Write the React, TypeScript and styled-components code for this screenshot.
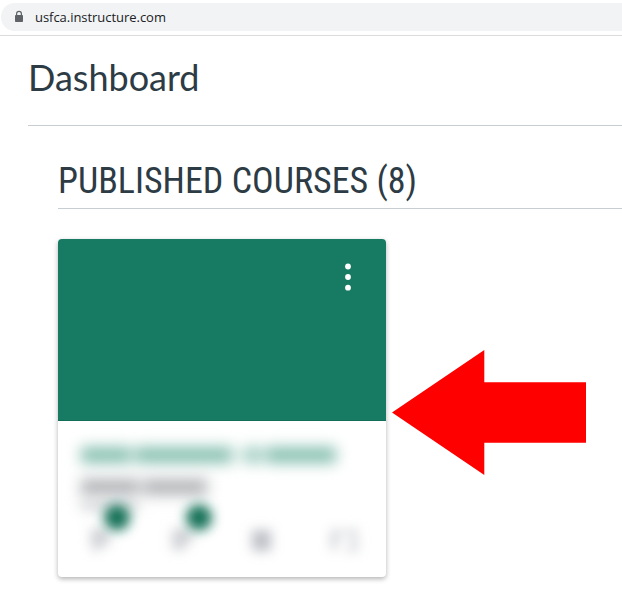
import React from "react";
import styled, { createGlobalStyle } from "styled-components";

const GlobalStyle = createGlobalStyle`
  *, *::before, *::after { box-sizing: border-box; }
  body { margin: 0; background: #fff; overflow: hidden; }
`;

const Page = styled.div`
  width: 622px;
  height: 608px;
  overflow: hidden;
  background: #fff;
  color: #2d3b45;
`;

const BrowserBar = styled.header`
  height: 36px;
  padding: 3px 0 0 1px;
  border-bottom: 1px solid #dadcde;
`;

const AddressField = styled.div`
  height: 28px;
  display: flex;
  align-items: center;
  padding-left: 13px;
  border-radius: 14px 0 0 14px;
  background: #f1f3f4;
`;

const Lock = styled.svg`
  width: 10px;
  height: 14px;
  flex: none;
`;

const Url = styled.span`
  margin-left: 11px;
  font: 13px/18px "Open Sans", "Noto Sans", sans-serif;
  letter-spacing: -0.04px;
  color: #202124;
  white-space: nowrap;
`;

const Main = styled.main`
  padding-left: 28px;
`;

const Title = styled.h1`
  height: 90px;
  margin: 0;
  padding-top: 19px;
  border-bottom: 1px solid #c7cdd1;
  font: 400 36px/44px Lato, sans-serif;
`;

const Courses = styled.section`
  padding: 30px 0 0 30px;
`;

const SectionTitle = styled.h2`
  height: 53px;
  margin: 0;
  border-bottom: 1px solid #c7cdd1;
  font: 400 36px/50px Roboto, sans-serif;
  font-stretch: 75%;
  white-space: nowrap;
`;

const Card = styled.article`
  width: 328px;
  height: 338px;
  margin-top: 30px;
  border-radius: 4px;
  overflow: hidden;
  background: #fff;
  box-shadow: 0 2px 5px rgba(0, 0, 0, 0.3);
`;

const Hero = styled.div`
  height: 182px;
  display: flex;
  justify-content: flex-end;
  padding: 23px 34px 0 0;
  background: #177b63;
  border-bottom: 1px solid #126e58;
`;

const MenuButton = styled.button`
  width: 8px;
  height: 30px;
  padding: 0;
  border: 0;
  background: none;
`;

const Dots = styled.svg`
  display: block;
`;

const Details = styled.div`
  height: 156px;
  padding: 26px 24px 0 23px;
`;

const Line = styled.div<{ $color: string; $h: number; $gap: number }>`
  display: flex;
  gap: 4px;
  height: ${(p) => p.$h}px;
  margin-bottom: ${(p) => p.$gap}px;
  color: ${(p) => p.$color};
  filter: blur(4px) blur(6px);
`;

const Word = styled.span<{ $w: number; $o?: number }>`
  width: ${(p) => p.$w}px;
  opacity: ${(p) => p.$o ?? 1};
  background: currentColor;
`;

const Actions = styled.svg`
  display: block;
  position: relative;
  overflow: visible;
  margin-top: -10px;
`;

const Arrow = styled.svg`
  position: absolute;
  left: 392px;
  top: 350px;
`;

export default function App() {
  return (
    <Page>
      <GlobalStyle />
      <BrowserBar>
        <AddressField>
          <Lock viewBox="0 0 10 14">
            <rect x="1" y="5" width="8" height="7" rx="0.8" fill="#5f6368" />
            <path d="M2.6 5V3.7a2.4 2.4 0 0 1 4.8 0V5" fill="none" stroke="#5f6368" strokeWidth="1.2" />
          </Lock>
          <Url>usfca.instructure.com</Url>
        </AddressField>
      </BrowserBar>
      <Main>
        <Title>Dashboard</Title>
        <Courses>
          <SectionTitle>PUBLISHED COURSES (8)</SectionTitle>
          <Card>
            <Hero>
              <MenuButton aria-label="Course options">
                <Dots width="8" height="30" viewBox="0 0 8 30" fill="#fff">
                  <circle cx="4" cy="4.5" r="2.9" />
                  <circle cx="4" cy="15" r="2.9" />
                  <circle cx="4" cy="25.7" r="2.9" />
                </Dots>
              </MenuButton>
            </Hero>
            <Details>
              <Line $color="#86bfaf" $h={16} $gap={16}>
                <Word $w={50} />
                <Word $w={97} />
                <Word $w={4} $o={0.3} />
                <Word $w={18} $o={0.8} />
                <Word $w={70} />
              </Line>
              <Line $color="#b0b3b6" $h={16} $gap={6}>
                <Word $w={58} />
                <Word $w={64} />
              </Line>
              <Line $color="#c6c9cc" $h={8} $gap={0}>
                <Word $w={58} />
              </Line>
              <Actions width="281" height="60" viewBox="0 0 281 60">
                <defs>
                  <filter id="soft" x="-100%" y="-100%" width="300%" height="300%">
                    <feGaussianBlur stdDeviation="6" />
                  </filter>
                </defs>
                <g filter="url(#soft)">
                  <path d="M9 30h19v17h-10v5h-7z" fill="#d0d2d6" />
                  <path d="M91 30h20v14h-7v7H91z" fill="#d0d2d6" />
                  <rect x="171" y="31" width="19" height="21" fill="#bfc1c7" />
                  <path d="M251 31h10v4h-5v15h-6zM266 31h10v5h-4v3h4v13h-10v-4h6V37h-6z" fill="#c4c7cd" />
                </g>
                <g filter="url(#soft)" fill="#167258">
                  <circle cx="36" cy="18.5" r="13" />
                  <circle cx="118" cy="18.5" r="13" />
                </g>
              </Actions>
            </Details>
          </Card>
        </Courses>
      </Main>
      <Arrow width="194" height="126" viewBox="0 0 194 126">
        <path d="M0 62.5 92.3 0v32.2H194v60.5H92.3V125z" fill="#f00" />
      </Arrow>
    </Page>
  );
}
